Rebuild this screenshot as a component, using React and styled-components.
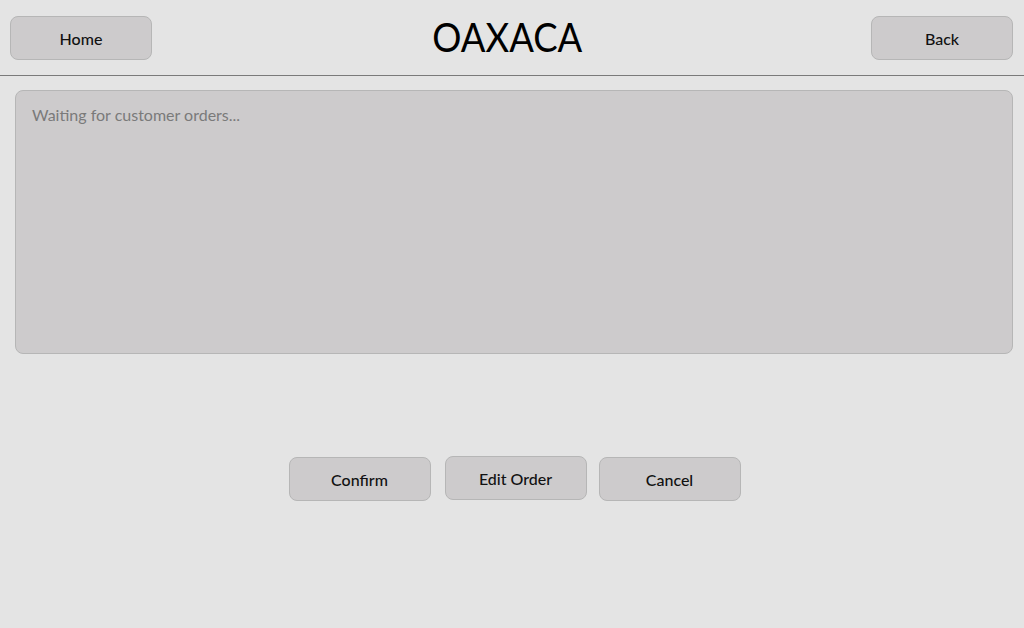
import React from "react";
import styled, { createGlobalStyle } from "styled-components";

const GlobalStyle = createGlobalStyle`
  html, body {
    margin: 0;
    padding: 0;
    background: #e4e4e4;
  }
  body {
    font-family: "Lato", "Open Sans", sans-serif;
  }
`;

const Page = styled.div`
  width: 100vw;
  height: 100vh;
  background: #e4e4e4;
  display: flex;
  flex-direction: column;
  box-sizing: border-box;
`;

const Header = styled.div`
  display: flex;
  align-items: flex-start;
  justify-content: space-between;
  height: 76px;
  padding: 16px 11px 0 10px;
  box-sizing: border-box;
  border-bottom: 1px solid #7a7a7a;
`;

const Button = styled.button`
  width: 142px;
  height: 44px;
  background: #cdcbcc;
  border: 1px solid #b6b6b6;
  border-radius: 8px;
  font-family: "Lato", "Open Sans", sans-serif;
  font-size: 16px;
  font-weight: 500;
  color: #111;
  cursor: pointer;
  margin-top: ${(p) => p.offset || 0}px;
  padding: 0;
`;

const Title = styled.h1`
  margin: -4px 0 0 -8px;
  font-family: "Lato", "Open Sans", sans-serif;
  font-weight: 400;
  font-size: 41px;
  line-height: 50px;
  color: #000;
  letter-spacing: 0;
  transform: scaleX(0.89);
`;

const Body = styled.div`
  display: flex;
  flex-direction: column;
  padding: 14px 11px 0 15px;
`;

const OrderBox = styled.div`
  height: 264px;
  background: #cdcbcc;
  border: 1px solid #b6b6b6;
  border-radius: 8px;
  padding: 14px 16px;
  box-sizing: border-box;
  color: #7a7a7a;
  font-size: 16px;
`;

const Actions = styled.div`
  display: flex;
  justify-content: center;
  align-items: flex-start;
  margin-top: 102px;
  padding-left: 1px;
`;

const Gap = styled.span`
  display: block;
  width: ${(p) => p.size}px;
`;

export default function App() {
  return (
    <Page>
      <GlobalStyle />
      <Header>
        <Button>Home</Button>
        <Title>OAXACA</Title>
        <Button>Back</Button>
      </Header>
      <Body>
        <OrderBox>Waiting for customer orders...</OrderBox>
        <Actions>
          <Button offset={1}>Confirm</Button>
          <Gap size={14} />
          <Button>Edit Order</Button>
          <Gap size={12} />
          <Button offset={1}>Cancel</Button>
        </Actions>
      </Body>
    </Page>
  );
}
